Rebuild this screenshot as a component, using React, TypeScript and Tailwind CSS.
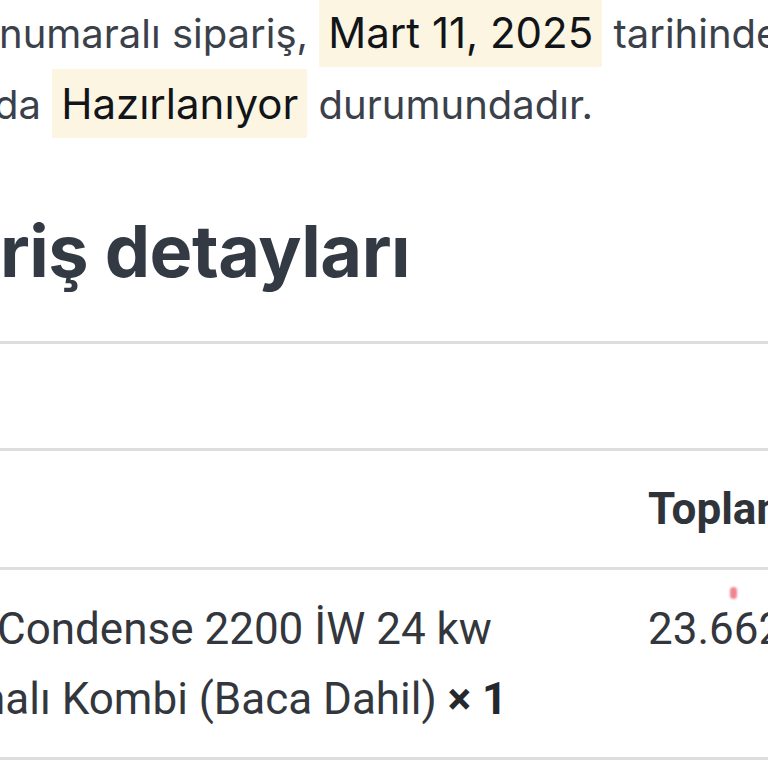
export default function App() {
  return (
    <div className="w-[768px] h-[768px] overflow-hidden bg-white relative">
      <p
        className="whitespace-nowrap text-[40px] leading-[70px] text-[#3b414a] -mt-[2px]"
        style={{ fontFamily: "Inter, 'Noto Sans', sans-serif" }}
      >
        <span className="block -ml-[1px]">
          <span>numaralı sipariş, </span>
          <span className="bg-[#fcf5e1] text-[#111418] text-[42px] px-[9px] py-[9px]">Mart 11, 2025</span>
          <span> tarihinde oluşturuldu ve</span>
        </span>
        <span className="block -ml-[6px]">
          <span>da </span>
          <span className="bg-[#fcf5e1] text-[#111418] text-[42px] px-[9px] py-[9px]">Hazırlanıyor</span>
          <span> durumundadır.</span>
        </span>
      </p>

      <h2
        className="whitespace-nowrap mt-[68px] text-[72px] leading-[86px] font-bold text-[#343a44] tracking-[-0.5px]"
        style={{ fontFamily: "Inter, 'Noto Sans', sans-serif" }}
      >
        riş detayları
      </h2>

      <div
        className="mt-[47px] whitespace-nowrap text-[#33373d]"
        style={{ fontFamily: "Roboto, 'Liberation Sans', sans-serif" }}
      >
        <div className="border-t-[3px] border-[#dedede] h-[107px]"></div>
        <div className="border-t-[3px] border-[#dedede] flex py-[23px]">
          <div className="w-[648px] shrink-0"></div>
          <div className="text-[44px] leading-[70px] font-bold text-[#2f343b]">Toplam</div>
        </div>
        <div className="border-t-[3px] border-[#dedede] flex pt-[24px] pb-[23px] relative">
          <div className="w-[648px] shrink-0 text-[44px] leading-[70px]">
            <div className="-ml-[3px]">Condense 2200 İW 24 kw</div>
            <div className="-ml-[19px]">
              nalı Kombi (Baca Dahil) <strong className="font-bold text-[#25292e]">× 1</strong>
            </div>
          </div>
          <div className="text-[44px] leading-[70px]">23.662,00 ₺</div>
          <span className="absolute left-[730px] top-[17px] w-[7px] h-[12px] rounded-full bg-[#ef8390] blur-[1px]"></span>
        </div>
        <div className="border-t-[3px] border-[#dedede] h-[20px]"></div>
      </div>
    </div>
  );
}
